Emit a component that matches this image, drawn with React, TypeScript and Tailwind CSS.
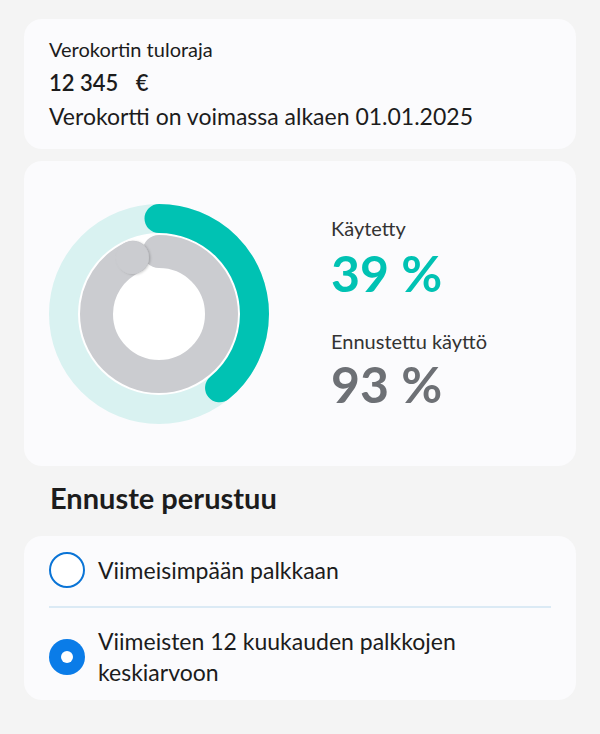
import React from 'react'

const TEAL = '#00c2b3'

function Ring({ r, width, pct, color, cap = true }: { r: number; width: number; pct: number; color: string; cap?: boolean }) {
  const len = 2 * Math.PI * r
  return (
    <circle
      cx={110}
      cy={110}
      r={r}
      fill="none"
      stroke={color}
      strokeWidth={width}
      strokeLinecap={cap ? 'round' : 'butt'}
      strokeDasharray={`${len * pct} ${len}`}
      transform="rotate(-90 110 110)"
    />
  )
}

function Donut({ used, forecast }: { used: number; forecast: number }) {
  // end point of the forecast arc, its cap is drawn on top with a soft shadow
  const a = 2 * Math.PI * forecast
  const ex = 110 + 62.5 * Math.sin(a)
  const ey = 110 - 62.5 * Math.cos(a)
  return (
    <svg width="220" height="220" viewBox="0 0 220 220" className="shrink-0">
      <defs>
        <filter id="capShadow" x="-50%" y="-50%" width="200%" height="200%">
          <feDropShadow dx="1.5" dy="0.5" stdDeviation="1.2" floodColor="#000" floodOpacity="0.2" />
        </filter>
      </defs>
      <circle cx={110} cy={110} r={81} fill="#ffffff" />
      <Ring r={95.5} width={29} pct={1} color="#d9f2f1" cap={false} />
      <Ring r={95.5} width={29} pct={used} color={TEAL} />
      <Ring r={62.5} width={33} pct={forecast} color="#cbccd0" />
      <circle cx={ex} cy={ey} r={16.5} fill="#cbccd0" filter="url(#capShadow)" />
    </svg>
  )
}

function Radio({ checked }: { checked: boolean }) {
  return checked ? (
    <span className="w-[36px] h-[36px] rounded-full bg-[#0a7ce8] flex items-center justify-center shrink-0">
      <span className="w-[12px] h-[12px] rounded-full bg-white" />
    </span>
  ) : (
    <span className="w-[36px] h-[36px] rounded-full border-2 border-[#0a74d6] bg-white shrink-0" />
  )
}

export default function App() {
  return (
    <div
      className="min-h-[734px] bg-[#f4f4f4] px-[24px] pt-[19px] text-[#1c1c1c]"
      style={{ fontFamily: 'Lato, "Open Sans", sans-serif' }}
    >
      {/* Tax card */}
      <div className="bg-[#fbfbfd] rounded-[18px] px-[25px] pt-[15px] pb-[17px]">
        <p className="text-[20px] leading-[30px]">Verokortin tuloraja</p>
        <p className="text-[22px] leading-[34px] font-semibold mt-[2px]">
          12 345 <span className="ml-[12px]">€</span>
        </p>
        <p className="text-[23px] leading-[32px]">Verokortti on voimassa alkaen 01.01.2025</p>
      </div>

      {/* Usage */}
      <div className="bg-[#fbfbfd] rounded-[18px] mt-[12px] h-[305px] pl-[25px] flex items-center">
        <Donut used={0.39} forecast={0.93} />
        <div className="ml-[62px] flex flex-col">
          <p className="text-[20px] leading-[24px] text-[#333]">Käytetty</p>
          <p className="text-[50px] leading-[56px] font-bold mt-[5px]" style={{ color: TEAL }}>
            39 %
          </p>
          <p className="text-[20px] leading-[24px] text-[#333] mt-[28px]">Ennustettu käyttö</p>
          <p className="text-[50px] leading-[56px] font-bold text-[#6d7075] mt-[3px]">93 %</p>
        </div>
      </div>

      <h2 className="text-[29px] leading-[36px] font-bold pl-[26px] mt-[14px] mb-[20px]">Ennuste perustuu</h2>

      {/* Forecast basis */}
      <div className="bg-[#fbfbfd] rounded-[18px] px-[25px] pt-[16px] pb-[12px]">
        <label className="flex items-center gap-[13px]">
          <Radio checked={false} />
          <span className="text-[23px] leading-[31px]">Viimeisimpään palkkaan</span>
        </label>
        <div className="h-[2px] bg-[#dbeaf5] mt-[18px] mb-[18px]" />
        <label className="flex items-center gap-[13px]">
          <Radio checked />
          <span className="text-[23px] leading-[31px]">
            Viimeisten 12 kuukauden palkkojen
            <br />
            keskiarvoon
          </span>
        </label>
      </div>
    </div>
  )
}
